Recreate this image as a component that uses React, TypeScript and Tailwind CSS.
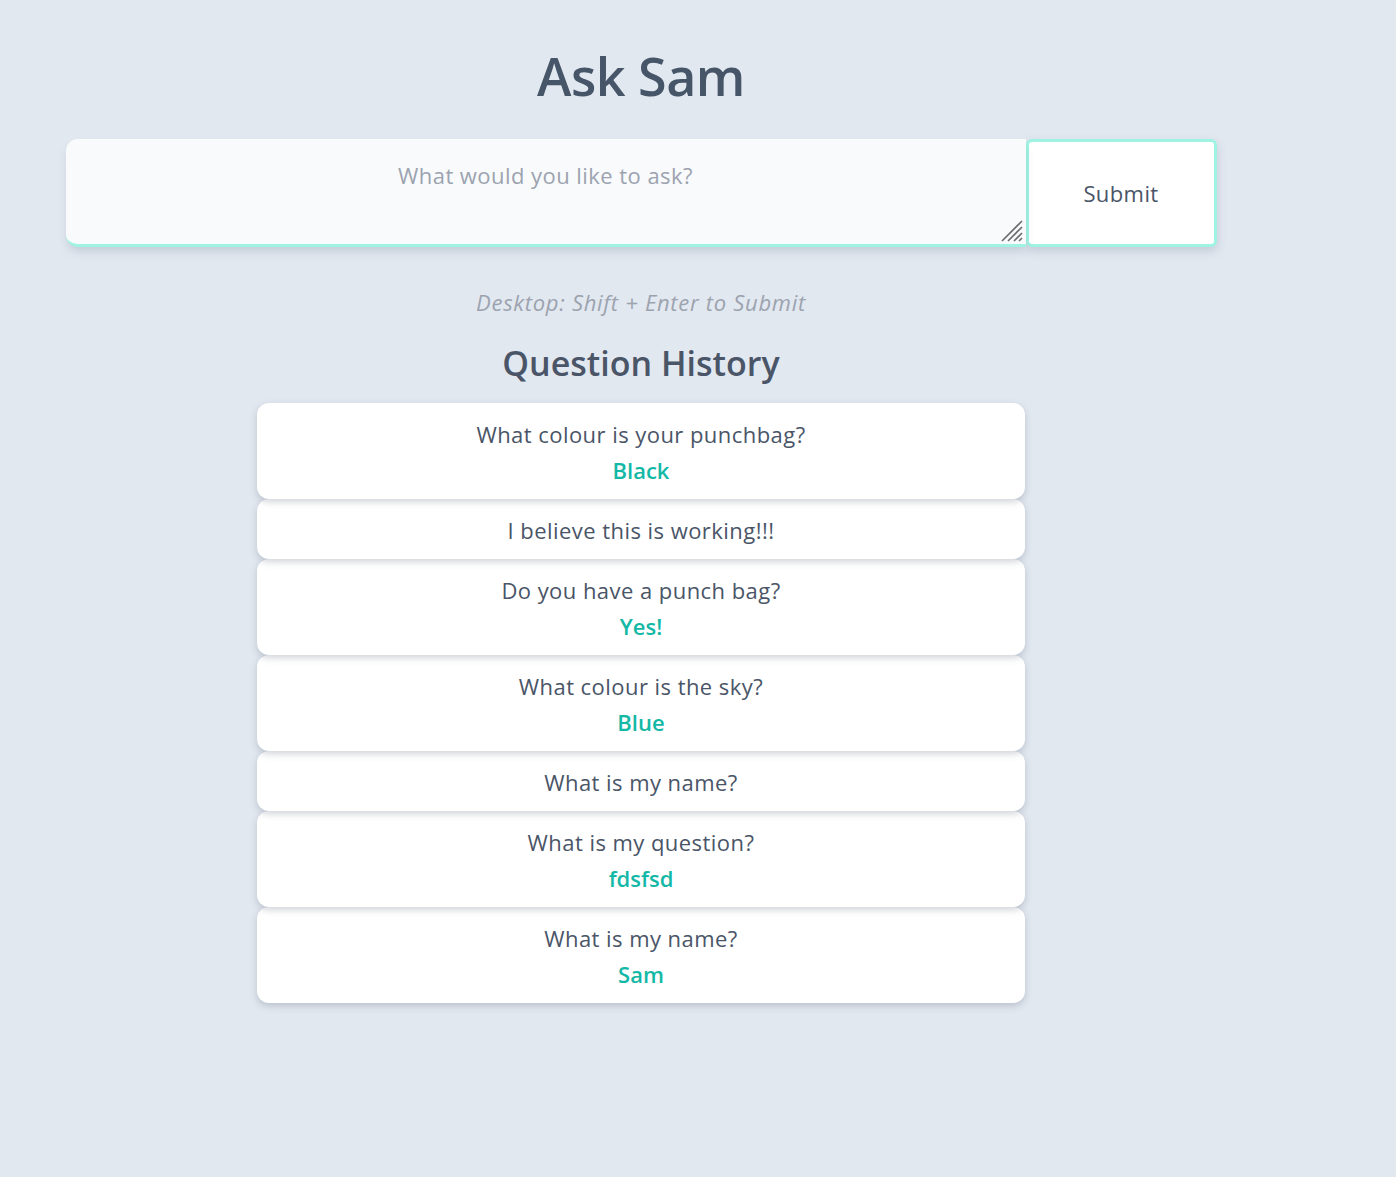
import React, { useState } from 'react';

type Entry = { question: string; answer?: string };

const history: Entry[] = [
  { question: 'What colour is your punchbag?', answer: 'Black' },
  { question: 'I believe this is working!!!' },
  { question: 'Do you have a punch bag?', answer: 'Yes!' },
  { question: 'What colour is the sky?', answer: 'Blue' },
  { question: 'What is my name?' },
  { question: 'What is my question?', answer: 'fdsfsd' },
  { question: 'What is my name?', answer: 'Sam' },
];

// earlier cards sit above later ones so their shadow falls onto the next card
const layers = ['z-[7]', 'z-[6]', 'z-[5]', 'z-[4]', 'z-[3]', 'z-[2]', 'z-[1]'];

const Grip = () => (
  <svg width="22" height="22" viewBox="0 0 22 22" className="absolute right-[3px] bottom-[5px] pointer-events-none">
    <g stroke="#6b6b6b" strokeWidth="1.6">
      <line x1="1" y1="21" x2="21" y2="1" />
      <line x1="7" y1="21" x2="21" y2="7" />
      <line x1="13" y1="21" x2="21" y2="13" />
      <line x1="18" y1="21" x2="21" y2="18" />
    </g>
  </svg>
);

const App: React.FC = () => {
  const [question, setQuestion] = useState('');

  return (
    <div className="min-h-[1177px] bg-[#e2e8f0] font-['Open_Sans',sans-serif] text-[#4a5568]">
      <div className="w-[1282px] flex flex-col items-center pt-[44px]">
        <h1 className="text-[52px] leading-[64px] font-semibold tracking-[-0.5px] text-[#475569]">Ask Sam</h1>

        <div className="mt-[31px] w-[1151px] flex items-stretch">
          <div className="relative flex-1">
            <textarea
              value={question}
              onChange={(e) => setQuestion(e.target.value)}
              placeholder="What would you like to ask?"
              className="block w-full h-[108px] resize-none bg-[#f8fafc] rounded-l-xl border-b-[3px] border-[#9ef3e2] pt-[20px] px-4 text-center text-[22px] leading-[32px] tracking-[0.45px] placeholder:text-[#9ca3af] shadow-[0_6px_10px_-2px_rgba(100,116,139,0.25)] outline-none"
            />
            <Grip />
          </div>
          <button className="w-[191px] h-[108px] bg-white border-[3px] border-[#9ef3e2] rounded-md text-[22px] tracking-[0.4px] text-[#4a5568] shadow-[0_4px_10px_rgba(100,116,139,0.25)]">
            Submit
          </button>
        </div>

        <p className="mt-[40px] text-[22px] leading-[30px] italic tracking-[0.7px] text-[#9ca3af]">
          Desktop: Shift + Enter to Submit
        </p>

        <h2 className="mt-[25px] text-[34px] leading-[42px] font-semibold text-[#4a5568]">
          Question History
        </h2>

        <div className="mt-[19px] w-[768px] flex flex-col">
          {history.map((item, i) => (
            <div
              key={i}
              className={`relative ${layers[i]} bg-white rounded-xl pt-[17px] pb-[15px] text-center shadow-[0_3px_7px_rgba(71,85,105,0.25)]`}
            >
              <div className="text-[22px] leading-[28px] tracking-[0.45px]">{item.question}</div>
              {item.answer && (
                <div className="mt-2 text-[22px] leading-[28px] font-semibold text-[#14b8a6]">
                  {item.answer}
                </div>
              )}
            </div>
          ))}
        </div>
      </div>
    </div>
  );
};

export default App;
